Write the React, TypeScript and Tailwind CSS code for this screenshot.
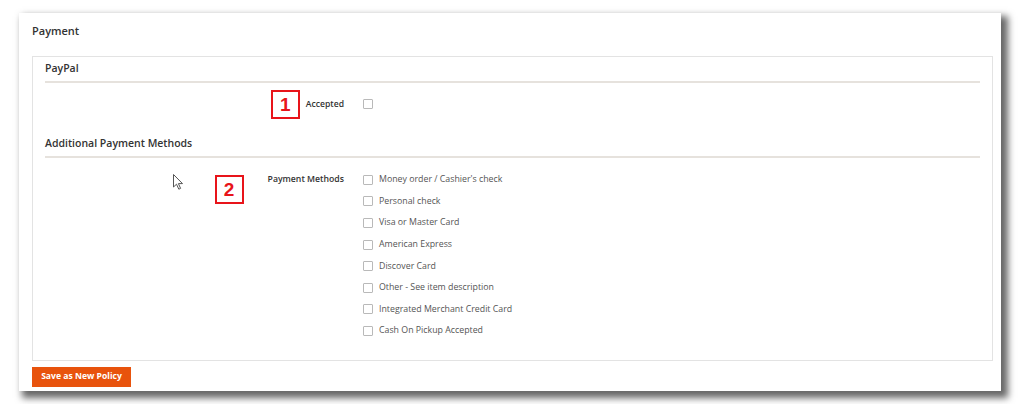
import React from "react"

const methods = [
  "Money order / Cashier's check",
  "Personal check",
  "Visa or Master Card",
  "American Express",
  "Discover Card",
  "Other - See item description",
  "Integrated Merchant Credit Card",
  "Cash On Pickup Accepted",
]

function Box() {
  return <span className="block w-[10px] h-[10px] shrink-0 border border-[#b9b9b9] rounded-[1px] bg-white" />
}

function Marker({ n }: { n: string }) {
  return (
    <span className="flex items-center justify-center w-[29px] h-[29px] shrink-0 border-2 border-[#e8141a] text-[#e8141a] text-[19px] font-bold leading-none font-['Liberation_Sans',Arial,sans-serif]">
      {n}
    </span>
  )
}

function Cursor() {
  return (
    <svg width="11" height="16" viewBox="0 0 11 16" className="shrink-0 block">
      <path d="M0.5 0.5 L0.5 13 L3.5 10.2 L5.8 15.2 L7.6 14.4 L5.4 9.6 L9.5 9.6 Z" fill="#fff" stroke="#555" strokeWidth="1" strokeLinejoin="round" />
    </svg>
  )
}

export default function App() {
  return (
    <div className="w-[1020px] h-[404px] bg-white pl-[19px] pt-[13px] font-['Open_Sans',sans-serif]">
      <div className="w-[982px] h-[378px] bg-white shadow-[5px_5px_7px_2px_rgba(0,0,0,0.6)] pt-[10px] pl-[13px] pr-[8px] flex flex-col">
        <h2 className="shrink-0 text-[11px] leading-[16px] font-semibold text-[#333] h-[33px]">Payment</h2>

        <div className="shrink-0 border border-[#e3e3e3] px-[12px] pb-[18px]">
          <div className="h-[26px] flex items-center border-b-2 border-[#e6e2dd]">
            <h3 className="text-[10.5px] font-semibold text-[#333]">PayPal</h3>
          </div>

          <div className="h-[42px] flex items-center">
            <div className="w-[299px] flex items-center justify-end gap-[6px]">
              <Marker n="1" />
              <span className="text-[8.6px] font-semibold text-[#333]">Accepted</span>
            </div>
            <div className="ml-[19px]"><Box /></div>
          </div>

          <div className="pt-[10px] pb-[5px] border-b-2 border-[#e6e2dd]">
            <h3 className="text-[10.5px] leading-[16px] font-semibold text-[#333]">Additional Payment Methods</h3>
          </div>

          <div className="flex mt-[11px]">
            <div className="w-[299px] flex items-start justify-end">
              <div className="mt-[5px] mr-[31px]"><Cursor /></div>
              <div className="mt-[6px] mr-[24px]"><Marker n="2" /></div>
              <span className="h-[21.6px] flex items-center text-[8.7px] font-semibold text-[#333]">Payment Methods</span>
            </div>
            <div className="ml-[19px] flex flex-col">
              {methods.map(m => (
                <label key={m} className="h-[21.6px] flex items-center gap-[6px]">
                  <Box />
                  <span className="text-[8.8px] text-[#555]">{m}</span>
                </label>
              ))}
            </div>
          </div>
        </div>

        <div className="shrink-0 mt-[6px] flex">
          <button type="button" className="block h-[20px] w-[99px] bg-[#e8530d] text-white text-[8.6px] font-bold">
            Save as New Policy
          </button>
        </div>
      </div>
    </div>
  )
}
